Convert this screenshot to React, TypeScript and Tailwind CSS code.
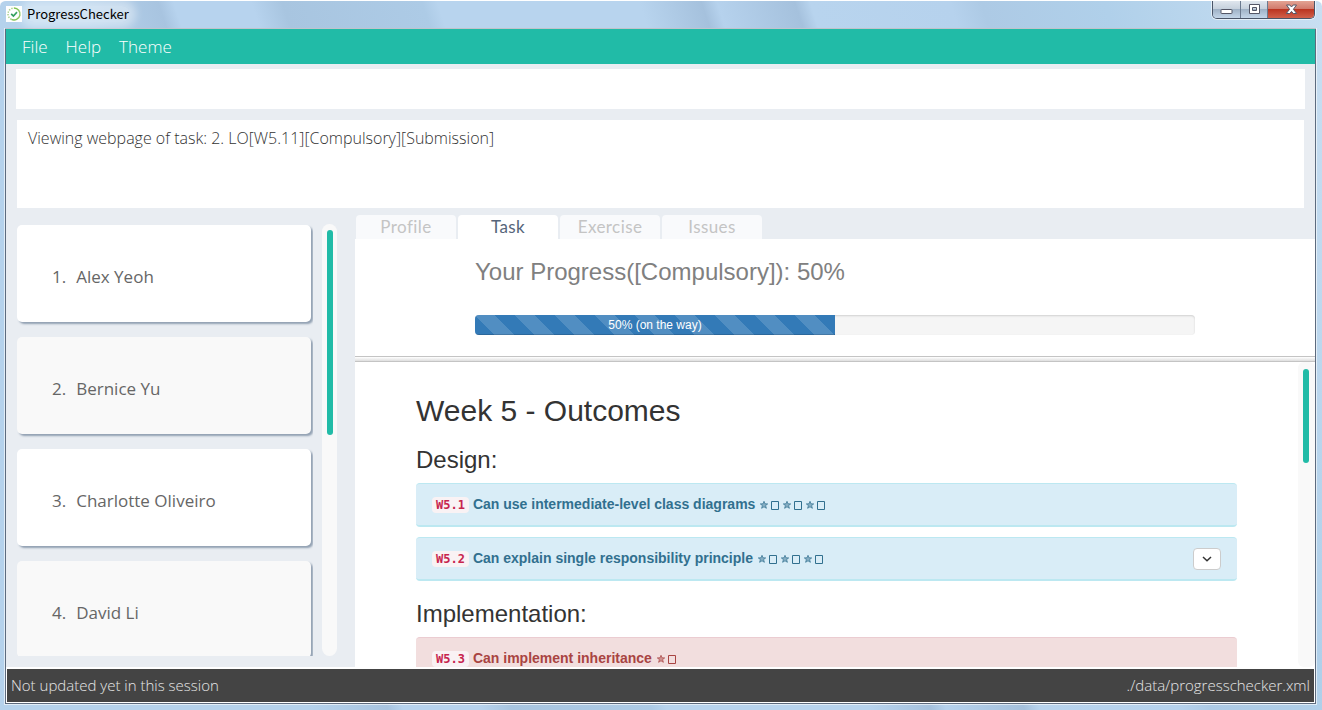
import React from "react";

const menus = ["File", "Help", "Theme"];
const students = ["Alex Yeoh", "Bernice Yu", "Charlotte Oliveiro", "David Li"];
const tabs = ["Profile", "Task", "Exercise", "Issues"];

function AppIcon() {
  return (
    <svg viewBox="0 0 16 16" className="size-4 shrink-0 bg-white" aria-hidden="true">
      <path d="M8 2a6 6 0 1 1-2.6 11.4" fill="none" stroke="#7cc04b" strokeWidth="1.5" />
      <path d="M5.4 13.4A6 6 0 0 1 8 2" fill="none" stroke="#a9d08a" strokeWidth="1.5" strokeDasharray="1.4 1.2" />
      <path d="m5.2 7.8 2.2 2.2 3.6-3.8" fill="none" stroke="#2f9e5b" strokeWidth="1.7" />
    </svg>
  );
}

function TitleBar() {
  return (
    <header className="flex h-7 shrink-0 items-start justify-between border-b border-[#5d6b7e] pl-px pr-px">
      <h1 className="flex items-center gap-1 pt-[5px] text-[12px] leading-4 text-black">
        <AppIcon />
        <span className="rounded-full bg-white/40 px-px font-['Noto_Sans_CJK_SC',sans-serif] text-[13px] shadow-[0_0_8px_6px_rgba(255,255,255,0.4)]">
          ProgressChecker
        </span>
      </h1>
      <div className="flex h-[18px] overflow-hidden rounded-b-[5px] border border-t-0 border-[#4a5568] shadow-[0_0_0_1px_rgba(255,255,255,0.6)]">
        <button
          aria-label="Minimize"
          className="flex w-7 items-center justify-center border-r border-[#6b7a8f] bg-[linear-gradient(#dfe6ee_0,#c5d0dc_48%,#9fb2c6_50%,#c3d5e8_100%)]"
        >
          <svg viewBox="0 0 13 11" className="h-[11px] w-[13px]" aria-hidden="true">
            <rect x="1" y="5.5" width="11" height="4" rx="0.5" fill="#fff" stroke="#535666" />
          </svg>
        </button>
        <button
          aria-label="Maximize"
          className="flex w-[27px] items-center justify-center border-r border-[#6b7a8f] bg-[linear-gradient(#dfe6ee_0,#c5d0dc_48%,#9fb2c6_50%,#c3d5e8_100%)]"
        >
          <svg viewBox="0 0 13 11" className="h-[11px] w-[13px]" aria-hidden="true">
            <path d="M1.5.5h10v9h-10zM4.500 3.500v3h4v-3z" fillRule="evenodd" fill="#fff" stroke="#535666" />
          </svg>
        </button>
        <button
          aria-label="Close"
          className="flex w-[46px] items-center justify-center bg-[linear-gradient(#e3a393_0,#d0786a_48%,#bb3521_50%,#d0604a_100%)]"
        >
          <svg viewBox="0 0 13 11" className="h-[11px] w-[13px]" aria-hidden="true">
            <path
              d="M1.500 1h3.300l1.700 2 1.700-2h3.300L8.400 5.250l3.300 4.250H8.200l-1.700-2.100-1.700 2.100H1.300l3.300-4.250z"
              fill="#fff"
              stroke="#535666"
            />
          </svg>
        </button>
      </div>
    </header>
  );
}

function StudentList() {
  return (
    <section aria-label="Students" className="flex w-[331px] shrink-0 gap-[9px] overflow-hidden pt-4 pb-[11px] pl-[11px]">
      <ul className="min-w-0 flex-1 space-y-[15px] overflow-hidden pt-px pr-[2px]">
        {students.map((name, i) => (
          <li
            key={name}
            className="flex h-[97px] items-center gap-[10px] rounded-[5px] bg-white pt-[6px] pl-[35px] text-[17px] text-[#666] shadow-[2px_2px_2px_rgba(100,120,145,0.65)] even:bg-[#f9f9f9]"
          >
            <span>{i + 1}.</span>
            <span>{name}</span>
          </li>
        ))}
      </ul>
      <div className="w-[15px] rounded-full bg-[#f9f9f9] p-[5px] pt-[6px]">
        <div className="h-[205px] w-[6px] rounded-full bg-[#21bba7]" />
      </div>
    </section>
  );
}

function Stars({ count }: { count: number }) {
  return (
    <span className="ml-[5px] inline-flex items-center gap-[3px]">
      {Array.from({ length: count * 2 }, (_, i) =>
        i % 2 === 0 ? (
          <svg key={i} viewBox="0 0 8 8" className="size-2" aria-hidden="true">
            <path
              d="m4 .3 1 2.500 2.700.1-2.100 1.700.8 2.700L4 5.800 1.600 7.300l.8-2.700L.3 2.900 3 2.800z"
              fill="currentColor"
              fillOpacity="0.5"
              stroke="currentColor"
              strokeWidth="0.7"
            />
          </svg>
        ) : (
          <svg key={i} viewBox="0 0 8 9" className="mr-px h-[9px] w-2" aria-hidden="true">
            <path d="M.5.5h7v8h-7z" fill="none" stroke="currentColor" />
          </svg>
        ),
      )}
    </span>
  );
}

type OutcomeProps = { code: string; text: string; stars: number; danger?: boolean; expandable?: boolean };

function Outcome({ code, text, stars, danger, expandable }: OutcomeProps) {
  const tone = danger
    ? "border-[#ebccd1] bg-[#f2dede] text-[#a94442]"
    : "border-[#bce8f1] bg-[#d9edf7] text-[#31708f]";
  return (
    <div className={`mb-[10px] flex h-11 items-center justify-between rounded-[4px] border-t border-b-2 px-4 text-[14px] leading-5 font-bold ${tone}`}>
      <p>
        <code className="mr-1 rounded-[4px] bg-[#f9f2f4] px-1 py-px font-['DejaVu_Sans_Mono',monospace] text-[12px] text-[#c7254e]">
          {code}
        </code>
        {text}
        <Stars count={stars} />
      </p>
      {expandable && (
        <button
          aria-label={`Expand ${code}`}
          className="flex h-[22px] w-7 items-center justify-center rounded-[4px] border border-[#ccc] bg-white text-[#333]"
        >
          <svg viewBox="0 0 10 6" className="h-[6px] w-[10px]" aria-hidden="true">
            <path d="m1 1 4 3.800L9 1" fill="none" stroke="currentColor" strokeWidth="1.5" />
          </svg>
        </button>
      )}
    </div>
  );
}

function TaskPane() {
  return (
    <section className="flex min-w-0 flex-1 flex-col pl-[18px]">
      <nav role="tablist" className="flex h-[31px] shrink-0 items-end gap-[2px] pl-px">
        {tabs.map((tab) => (
          <button
            key={tab}
            role="tab"
            aria-selected={tab === "Task"}
            className="h-6 w-[100px] rounded-t-[4px] bg-[#f9fafc] font-['Lato',sans-serif] text-[17px] leading-6 tracking-wide text-[#c4c4c4] aria-selected:bg-white aria-selected:text-[#56657a]"
          >
            {tab}
          </button>
        ))}
      </nav>
      <div className="h-[117px] shrink-0 bg-white font-['Liberation_Sans',sans-serif]">
        <div className="mx-auto w-3/4 pt-5">
          <h2 className="text-[24px] leading-[26px] text-[#808080]">Your Progress([Compulsory]): 50%</h2>
          <div className="mt-[30px] h-5 overflow-hidden rounded-[4px] bg-[#f5f5f5] shadow-[inset_0_1px_2px_rgba(0,0,0,0.15)]">
            <div
              role="progressbar"
              aria-valuenow={50}
              className="h-full w-1/2 bg-[#337ab7] bg-[linear-gradient(45deg,rgba(255,255,255,.15)_25%,transparent_25%,transparent_50%,rgba(255,255,255,.15)_50%,rgba(255,255,255,.15)_75%,transparent_75%,transparent)] bg-[length:40px_40px] text-center text-[12px] leading-5 text-white shadow-[inset_0_-1px_0_rgba(0,0,0,0.15)]"
            >
              50% (on the way)
            </div>
          </div>
        </div>
      </div>
      <div className="h-[6px] shrink-0 border-y border-[#c4c4c4] bg-[linear-gradient(#fff,#dedede)]" />
      <div className="flex min-h-0 flex-1 bg-white">
        <article className="min-w-0 flex-1 overflow-hidden px-[61px] pt-8 font-['Liberation_Sans',sans-serif] text-[#333]">
          <h2 className="text-[30px] leading-[33px]">Week 5 - Outcomes</h2>
          <h3 className="mt-5 mb-[10px] text-[24px] leading-[26px]">Design:</h3>
          <Outcome code="W5.1" text="Can use intermediate-level class diagrams" stars={3} />
          <Outcome code="W5.2" text="Can explain single responsibility principle" stars={3} expandable />
          <h3 className="mt-5 mb-[10px] text-[24px] leading-[26px]">Implementation:</h3>
          <Outcome code="W5.3" text="Can implement inheritance" stars={1} danger />
        </article>
        <div className="w-[17px] shrink-0 rounded-[6px] bg-[#f9f9f9] px-[5px] pt-[7px]">
          <div className="h-[94px] w-[6px] rounded-full bg-[#21bba7]" />
        </div>
      </div>
    </section>
  );
}

export default function App() {
  return (
    <div className="flex h-screen flex-col overflow-hidden rounded-t-[6px] border-t border-white bg-[linear-gradient(72deg,#b5d2ec_0,#b5d2ec_20%,#a8c4e0_25%,#b7d3ee_26%,#b7d3ee_31%,#a8c5e0_33%,#adcbe6_42%,#b8d4ee_43%,#b8d4ee_56%,#a5c1dd_60%,#b6d2ed_61%,#a5c1dd_66%,#b8d4ee_67%,#b6d2ed_76%,#adcae5_78%,#b0d0ea_86%,#c9dff2_100%)] pr-[6px] pb-[6px] pl-[5px] font-['Open_Sans','Noto_Sans',sans-serif]">
      <TitleBar />
      <main className="flex min-h-0 flex-1 flex-col border-x border-b border-[#5d6b7e] bg-[#e9edf2] shadow-[0_0_0_1px_rgba(255,255,255,0.6)]">
        <nav className="flex h-[35px] shrink-0 items-center gap-[18px] bg-[#21bba7] px-4 text-[17px] font-light text-white">
          {menus.map((menu) => (
            <button key={menu}>{menu}</button>
          ))}
        </nav>
        <div className="shrink-0 px-[10px] pt-[5px]">
          <input aria-label="Command" className="block h-10 w-full bg-white px-3 text-[17px] font-light outline-none" />
        </div>
        <div className="mx-[11px] mt-[11px] h-[88px] shrink-0 bg-white px-[11px] pt-[6px] text-[16px] leading-6 font-light text-[#333]">
          Viewing webpage of task: 2. LO[W5.11][Compulsory][Submission]
        </div>
        <div className="flex min-h-0 flex-1">
          <StudentList />
          <TaskPane />
        </div>
        <footer className="flex h-9 shrink-0 items-center justify-between border border-t-2 border-white bg-[#444] px-1 text-[15px] font-light text-[#e6e6e6]">
          <span>Not updated yet in this session</span>
          <span>./data/progresschecker.xml</span>
        </footer>
      </main>
    </div>
  );
}
